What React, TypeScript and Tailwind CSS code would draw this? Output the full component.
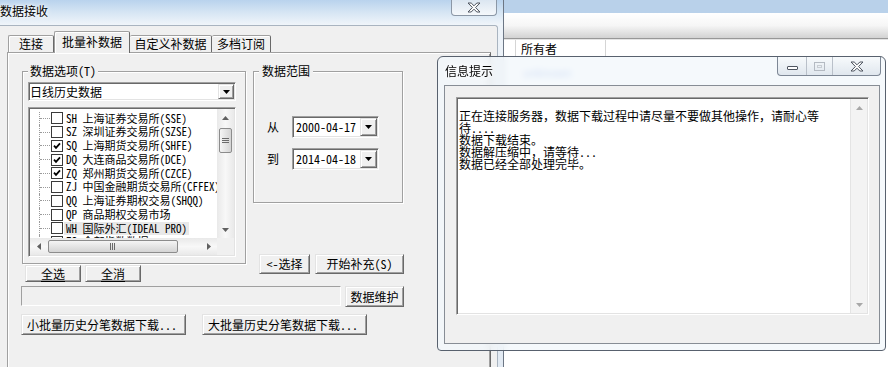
import type { ReactNode } from "react";

const song = "font-['Noto_Sans_Mono_CJK_SC','Noto_Sans_CJK_SC',monospace]";
const ui = "font-['Noto_Sans_CJK_SC','Noto_Sans',sans-serif]";

const raised =
	"border border-t-[#e3e3e3] border-l-[#e3e3e3] border-r-[#696969] border-b-[#696969] bg-[#f0f0f0] shadow-[inset_1px_1px_0_#fff,inset_-1px_-1px_0_#a0a0a0]";
const sunken =
	"border border-t-[#a0a0a0] border-l-[#a0a0a0] border-r-white border-b-white shadow-[inset_1px_1px_0_#696969,inset_-1px_-1px_0_#e3e3e3]";
const etched =
	"border border-[#a0a0a0] shadow-[inset_1px_1px_0_#fff,1px_1px_0_#fff]";
const glow = "[text-shadow:0_0_6px_#fff,0_0_3px_#fff]";

type Market = { code: string; name: string; on?: boolean; sel?: boolean };

const markets: Market[] = [
	{ code: "SH", name: "上海证券交易所(SSE)" },
	{ code: "SZ", name: "深圳证券交易所(SZSE)" },
	{ code: "SQ", name: "上海期货交易所(SHFE)", on: true },
	{ code: "DQ", name: "大连商品交易所(DCE)", on: true },
	{ code: "ZQ", name: "郑州期货交易所(CZCE)", on: true },
	{ code: "ZJ", name: "中国金融期货交易所(CFFEX)" },
	{ code: "QQ", name: "上海证券期权交易(SHQQ)" },
	{ code: "QP", name: "商品期权交易市场" },
	{ code: "WH", name: "国际外汇(IDEAL PRO)", sel: true },
	{ code: "ZS", name: "全部指数数据" },
];

const logLines = [
	"正在连接服务器，数据下载过程中请尽量不要做其他操作，请耐心等",
	"待....",
	"数据下载结束。",
	"数据解压缩中，请等待...",
	"数据已经全部处理完毕。",
];

function Tri({ dir, color = "#606060" }: { dir: "up" | "down" | "left" | "right"; color?: string }) {
	const vertical = dir === "up" || dir === "down";
	const pts = {
		up: "0,4 3.5,0 7,4",
		down: "0,0 7,0 3.5,4",
		left: "4,0 4,7 0,3.5",
		right: "0,0 0,7 4,3.5",
	}[dir];
	return (
		<svg width={vertical ? 7 : 4} height={vertical ? 4 : 7} viewBox={vertical ? "0 0 7 4" : "0 0 4 7"}>
			<polygon points={pts} fill={color} />
		</svg>
	);
}

function Btn({ className, children }: { className: string; children: ReactNode }) {
	return (
		<div className={`${raised} ${className} flex shrink-0 items-center justify-center text-[12px] leading-[14px] whitespace-nowrap`}>
			{children}
		</div>
	);
}

function CloseGlyph() {
	return (
		<svg width="14" height="11" viewBox="-1 -1 14 11">
			<polygon
				points="0,0 3.2,0 6,2.8 8.8,0 12,0 7.6,4.5 12,9 8.8,9 6,6.2 3.2,9 0,9 4.4,4.5"
				fill="#fbfbfb"
				stroke="#4e5560"
				strokeWidth="1"
				strokeLinejoin="round"
			/>
		</svg>
	);
}

function Check({ on }: { on?: boolean }) {
	return (
		<div className="flex h-[12px] w-[12px] shrink-0 items-center justify-center border border-[#3a3a3a] bg-white">
			{on && (
				<svg width="8" height="8" viewBox="0 0 8 8">
					<path d="M1 3.6 L3 5.8 L7 1.4" fill="none" stroke="#000" strokeWidth="1.8" />
				</svg>
			)}
		</div>
	);
}

function DropBtn({ className }: { className: string }) {
	return (
		<div className={`${raised} ${className} flex shrink-0 items-center justify-center`}>
			<Tri dir="down" color="#000" />
		</div>
	);
}

function DateBox({ label, value }: { label: string; value: string }) {
	return (
		<div className="flex items-center pl-[13px]">
			<span className="w-[25px] text-[12px] leading-[14px]">{label}</span>
			<div className={`${sunken} flex h-[22px] w-[87px] items-stretch bg-white p-[1px]`}>
				<span className={`${song} flex-1 pl-[2px] text-[12px] leading-[18px]`}>{value}</span>
				<DropBtn className="w-[17px]" />
			</div>
		</div>
	);
}

function MarketTree() {
	return (
		<div className={`${sunken} mt-[6px] ml-[5px] flex h-[150px] w-[208px] flex-col bg-white p-[1px]`}>
			<div className="flex min-h-0 flex-1">
				<div className="min-w-0 flex-1 overflow-hidden pt-[2.5px]">
					{markets.map((m) => (
						<div key={m.code} className="flex h-[13.75px] items-stretch">
							<div className="w-[9px] shrink-0" />
							<div className="flex w-[12px] shrink-0 items-center border-l border-dotted border-[#9a9a9a]">
								<div className="h-0 w-[10px] border-t border-dotted border-[#9a9a9a]" />
							</div>
							<div className="flex items-center">
								<Check on={m.on} />
							</div>
							<span
								className={`${song} ml-[1px] px-[2px] text-[11px] leading-[13.75px] whitespace-nowrap ${m.sel ? "bg-[#e8e8e8]" : ""}`}
							>
								{m.code} {m.name}
							</span>
						</div>
					))}
				</div>
				<div className="flex w-[17px] shrink-0 flex-col bg-[linear-gradient(to_right,#e9e9e9,#f8f8f8,#e9e9e9)]">
					<div className="flex h-[17px] items-center justify-center">
						<Tri dir="up" />
					</div>
					<div className="flex-1">
						<div className="mx-[2px] mt-[2px] flex h-[25px] items-center justify-center rounded-[2px] border border-[#8c8c8c] bg-[linear-gradient(to_right,#f5f5f5,#d4d4d4)]">
							<svg width="7" height="6" viewBox="0 0 7 6">
								<path d="M0 0.5H7M0 2.5H7M0 4.5H7" stroke="#6a6a6a" strokeWidth="1" />
							</svg>
						</div>
					</div>
					<div className="flex h-[17px] items-center justify-center">
						<Tri dir="down" />
					</div>
				</div>
			</div>
			<div className="flex h-[17px] shrink-0">
				<div className="flex flex-1 items-stretch bg-[linear-gradient(to_bottom,#e9e9e9,#f8f8f8,#e9e9e9)]">
					<div className="flex w-[17px] items-center justify-center">
						<Tri dir="left" />
					</div>
					<div className="flex-1 py-[2px] pl-[1px]">
						<div className="flex h-full w-[130px] items-center justify-center rounded-[2px] border border-[#8c8c8c] bg-[linear-gradient(to_bottom,#f5f5f5,#d4d4d4)]">
							<svg width="6" height="7" viewBox="0 0 6 7">
								<path d="M0.5 0V7M2.5 0V7M4.5 0V7" stroke="#6a6a6a" strokeWidth="1" />
							</svg>
						</div>
					</div>
					<div className="flex w-[17px] items-center justify-center">
						<Tri dir="right" />
					</div>
				</div>
				<div className="w-[17px] bg-[#f0f0f0]" />
			</div>
		</div>
	);
}

function BackWindow() {
	return (
		<div className="absolute inset-y-0 right-0 left-[504px] flex flex-col bg-white">
			<div className="h-[13px] bg-[#b9d1ea]" />
			<div className="h-[25px] bg-[linear-gradient(to_bottom,#ffffff,#f6f6f6_50%,#d2d2d2)]" />
			<div className="h-[2px] border-t border-[#979797] bg-[#e4e4e4]" />
			<div className="flex h-[17px] text-[12px] leading-[17px]">
				<div className="w-[12px] border-r border-[#d5d5d5]" />
				<div className="w-[90px] border-r border-[#d5d5d5] pl-[5px]">所有者</div>
			</div>
			<div className="mt-[8px] h-[14px] pl-[19px] text-[11px] leading-[14px] text-[#3a6fd8]">unknown</div>
		</div>
	);
}

function MainWindow() {
	return (
		<div className="absolute top-0 left-0 flex h-[367px] w-[504px] flex-col border-r border-[#6c7684]">
			<div className="flex h-[25px] shrink-0 items-start justify-between bg-[linear-gradient(to_bottom,#b9d3ed,#d9e7f4_55%,#f0f5fa)]">
				<span className={`mt-[4px] text-[12px] leading-[14px] ${glow}`}>数据接收</span>
				<div className="mr-[6px] flex h-[16px] w-[46px] items-center justify-center rounded-b-[4px] border border-t-0 border-[#8b97a6] bg-[linear-gradient(to_bottom,#dbe6f1,#f5f8fb)]">
					<CloseGlyph />
				</div>
			</div>
			<div className="flex flex-1">
				<div className={`${song} flex w-[498px] flex-col rounded-tr-[3px] border-t border-r border-[#a9b4c0] bg-[#f0f0f0] pt-[5px] pl-[7px]`}>
					<div className="flex h-[21px] items-end text-[12px] leading-[14px]">
						<div className="ml-[1px] flex h-[17px] w-[46px] items-center justify-center rounded-t-[2px] border-t border-r border-l border-t-[#a0a0a0] border-r-[#696969] border-l-[#a0a0a0] shadow-[inset_1px_1px_0_#fff]">
							连接
						</div>
						<div className="relative z-10 -mb-[1px] flex h-[22px] w-[76px] items-start justify-center rounded-t-[2px] border-t border-r border-l border-t-[#a0a0a0] border-r-[#696969] border-l-[#a0a0a0] bg-[#f0f0f0] pt-[3px] shadow-[inset_1px_1px_0_#fff]">
							批量补数据
						</div>
						<div className="flex h-[17px] w-[82px] items-center justify-center rounded-t-[2px] border-t border-r border-t-[#a0a0a0] border-r-[#696969] shadow-[inset_0_1px_0_#fff]">
							自定义补数据
						</div>
						<div className="flex h-[17px] w-[59px] items-center justify-center rounded-t-[2px] border-t border-r border-t-[#a0a0a0] border-r-[#696969] shadow-[inset_0_1px_0_#fff]">
							多档订阅
						</div>
					</div>
					<div className="flex w-[484px] flex-1 flex-col border-t border-r border-l border-t-[#a0a0a0] border-r-[#696969] border-l-[#a0a0a0] pt-[18px] pl-[14px] shadow-[inset_1px_1px_0_#fff,inset_-1px_0_0_#a0a0a0]">
						<div className="flex items-start">
							<div className="flex w-[224px] flex-col">
								<div className={`${etched} h-[193px] w-[224px]`}>
									<div className="-mt-[8px] ml-[5px] w-fit bg-[#f0f0f0] px-[2px] text-[12px] leading-[14px]">
										数据选项(T)
									</div>
									<div className={`${sunken} mt-[4px] ml-[5px] flex h-[19px] w-[208px] items-stretch bg-white p-[1px]`}>
										<span className="flex-1 text-[12px] leading-[15px]">日线历史数据</span>
										<DropBtn className="w-[16px]" />
									</div>
									<MarketTree />
								</div>
								<div className="mt-[1px] ml-[3px] flex gap-[4px]">
									<Btn className="h-[17px] w-[56px]">
										<span className="underline underline-offset-[2px]">全选</span>
									</Btn>
									<Btn className="h-[17px] w-[56px]">
										<span className="underline underline-offset-[2px]">全消</span>
									</Btn>
								</div>
							</div>
							<div className="ml-[7px] flex w-[151px] flex-col">
								<div className={`${etched} h-[132px] w-[150px]`}>
									<div className="-mt-[8px] ml-[5px] w-fit bg-[#f0f0f0] px-[3px] text-[12px] leading-[14px]">
										数据范围
									</div>
									<div className="mt-[38px]">
										<DateBox label="从" value="2000-04-17" />
									</div>
									<div className="mt-[10px]">
										<DateBox label="到" value="2014-04-18" />
									</div>
								</div>
								<div className="mt-[51px] flex justify-end gap-[5px]">
									<Btn className="h-[20px] w-[51px]">&lt;-选择</Btn>
									<Btn className="h-[20px] w-[89px]">开始补充(S)</Btn>
								</div>
							</div>
						</div>
						<div className="mt-[4px] -ml-[1px] flex items-start gap-[4px]">
							<div className="h-[20px] w-[320px] border border-t-[#a0a0a0] border-r-white border-b-white border-l-[#a0a0a0]" />
							<Btn className="h-[21px] w-[59px]">数据维护</Btn>
						</div>
						<div className="mt-[7px] -ml-[1px] flex gap-[16px]">
							<Btn className="h-[21px] w-[165px] justify-start pl-[5px]">小批量历史分笔数据下载...</Btn>
							<Btn className="h-[21px] w-[165px] justify-start pl-[5px]">大批量历史分笔数据下载...</Btn>
						</div>
					</div>
				</div>
				<div className="flex-1 bg-[linear-gradient(to_bottom,#edf3f9,#e2eaf3)]" />
			</div>
		</div>
	);
}

function InfoDialog() {
	return (
		<div className="absolute top-[56px] left-[437px] flex h-[295px] w-[449px] flex-col rounded-t-[6px] rounded-b-[4px] border border-[#58616e] bg-[#f3f8fb]/80 backdrop-blur-[3px]">
			<div className="flex h-[28px] shrink-0 items-start justify-between">
				<span className={`mt-[7px] ml-[7px] text-[12px] leading-[14px] ${glow}`}>信息提示</span>
				<div className="mr-[4px] flex h-[19px] overflow-hidden rounded-b-[4px] border border-t-0 border-[#7d8795] bg-[linear-gradient(to_bottom,#f7fafc,#e0e7ee)]">
					<div className="flex w-[29px] items-center justify-center border-r border-[#b9c0c9]">
						<div className="mt-[3px] h-[4px] w-[11px] rounded-[1px] border border-[#4e5560] bg-white" />
					</div>
					<div className="flex w-[26px] items-center justify-center border-r border-[#b9c0c9]">
						<div className="flex h-[9px] w-[11px] items-center justify-center border border-[#b4bac2]">
							<div className="h-[3px] w-[5px] border border-[#c8cdd3]" />
						</div>
					</div>
					<div className="flex w-[47px] items-center justify-center">
						<CloseGlyph />
					</div>
				</div>
			</div>
			<div className="ml-[6px] h-[259px] w-[436px] border border-[#878d95] bg-[#f0f0f0] pt-[11px] pl-[11px]">
				<div className={`${sunken} flex h-[218px] w-[413px] bg-white p-[1px]`}>
					<div className={`${song} flex-1 pt-[11px] pl-[1px] text-[12px] leading-[12px] whitespace-nowrap`}>
						{logLines.map((line) => (
							<div key={line}>{line}</div>
						))}
					</div>
					<div className="flex w-[17px] flex-col justify-between border-l border-[#e4e4e4] bg-[#f3f3f3]">
						<div className="flex h-[17px] items-center justify-center">
							<Tri dir="up" color="#a8a8a8" />
						</div>
						<div className="flex h-[17px] items-center justify-center">
							<Tri dir="down" color="#a8a8a8" />
						</div>
					</div>
				</div>
			</div>
		</div>
	);
}

export default function App() {
	return (
		<div className={`relative h-[367px] w-[888px] overflow-hidden bg-white text-black ${ui}`}>
			<BackWindow />
			<MainWindow />
			<InfoDialog />
		</div>
	);
}
